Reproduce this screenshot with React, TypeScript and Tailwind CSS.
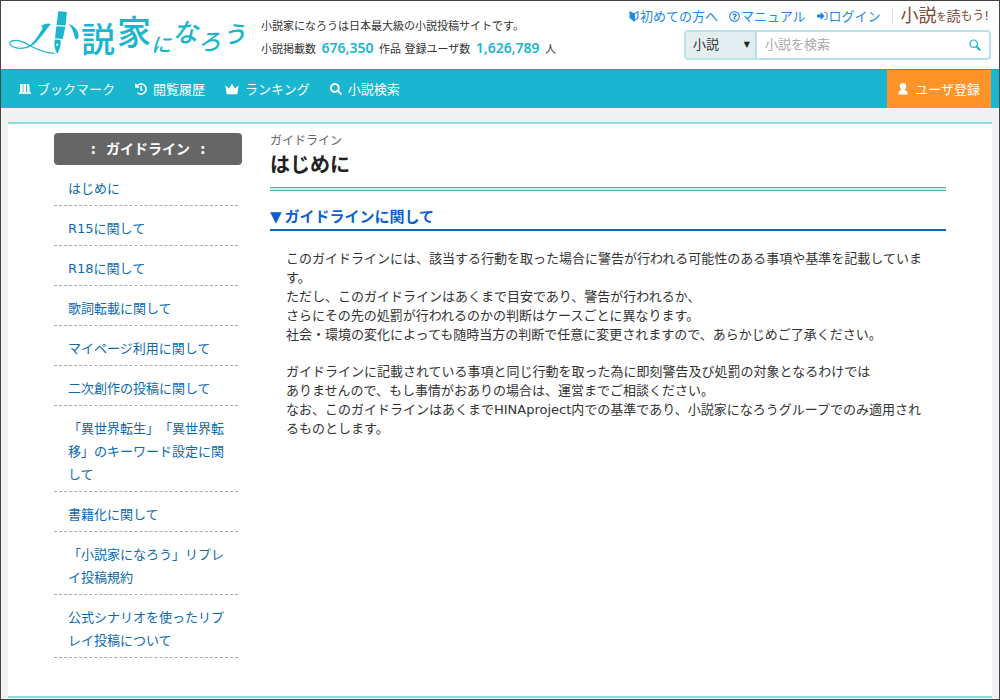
import type { ReactNode } from 'react'
import { FaHistory, FaRegQuestionCircle, FaSearch } from 'react-icons/fa'

const guideLinks = [
  'はじめに',
  'R15に関して',
  'R18に関して',
  '歌詞転載に関して',
  'マイページ利用に関して',
  '二次創作の投稿に関して',
  '「異世界転生」「異世界転移」のキーワード設定に関して',
  '書籍化に関して',
  '「小説家になろう」リプレイ投稿規約',
  '公式シナリオを使ったリプレイ投稿について',
]

function BooksIcon() {
  return (
    <svg width="12" height="12" viewBox="0 0 12 12" fill="currentColor">
      <rect x="1" y="1" width="2.6" height="8.6" />
      <rect x="4.4" y="1" width="2.6" height="8.6" />
      <path d="M7.7 1h2.5l.6 8.600H8.200z" />
      <rect x="0" y="9.2" width="12" height="1.6" />
    </svg>
  )
}

function BeginnerIcon() {
  return (
    <svg width="10" height="12" viewBox="0 0 10 12">
      <path d="M.5 1 5 3.200V11.500L.5 8z" fill="currentColor" />
      <path d="M9 1.700 5.400 3.600v7L9 7.700z" fill="none" stroke="currentColor" strokeWidth="1.100" />
    </svg>
  )
}

function LoginIcon() {
  return (
    <svg width="11" height="10" viewBox="0 0 11 10">
      <path d="M0 3.400h3.600V1L7.600 5l-4 4V6.600H0z" fill="currentColor" />
      <path d="M7.500 1.500h1a1.500 1.500 0 0 1 1.500 1.500v4a1.500 1.500 0 0 1-1.500 1.500h-1" fill="none" stroke="currentColor" strokeWidth="1" />
    </svg>
  )
}

function CrownIcon() {
  return (
    <svg width="14" height="12" viewBox="0 0 14 12" fill="currentColor">
      <path d="M.3 2.200 4 5.600 7 .8 10 5.600 13.700 2.200 12.300 11.300H1.700z" />
    </svg>
  )
}

function PersonIcon() {
  return (
    <svg width="10" height="12" viewBox="0 0 10 12" fill="currentColor">
      <path d="M5 0a3.200 3.200 0 0 1 3.200 3.300C8.200 5 7.300 6.500 6.400 6.900 8.600 7.300 9.600 8.600 9.600 11.600H.4C.4 8.600 1.400 7.300 3.600 6.900 2.700 6.500 1.800 5 1.800 3.300A3.200 3.200 0 0 1 5 0z" />
    </svg>
  )
}

function Logo() {
  return (
    <svg
      width="240"
      height="68"
      viewBox="8 1 240 68"
      fill="#1ab6cd"
      className="shrink-0 font-medium"
      role="img"
      aria-label="小説家になろう"
    >
      {/* left sweep */}
      <path d="M41 26C44.500 23.500 49 22.800 50.800 24.300 45 31 41 38 33.500 44.700L31.500 44C36.500 38.500 40 33 42.500 28.500 42.500 27.300 42 26.500 41 26z" />
      {/* loop and tail */}
      <path
        d="M33 43.800C28 49 18 49.500 12.500 46.500 7.500 43.500 10 40.300 16 40.300 27 40.300 34 52.500 54 53.400"
        fill="none"
        stroke="#1ab6cd"
        strokeWidth="1.300"
        strokeLinecap="round"
      />
      {/* fountain pen */}
      <path d="M58.300 11.300 66.900 12.100 65.600 25.400 56.600 25z" />
      <path d="M56.400 26.300 65.400 26.700 62.700 39 55 38.200z" />
      <path
        d="M54.800 39.500 60.500 39.900C61.200 44 60.300 48 57.300 54 54.600 49 53.700 44.500 54.800 39.500zM57.200 43.600a1 1.200 0 1 0 .1 2.400 1 1.200 0 0 0-.1-2.400z"
        fillRule="evenodd"
      />
      {/* right drop */}
      <path d="M68.700 23.800C74 26 78.500 30.500 78.600 35.800 78.500 39.600 75.800 40.500 74.800 37.500 74 33 72 28 68.700 23.800z" />
      <text x="81" y="52" fontSize="34">説</text>
      <text x="117" y="45" fontSize="34">家</text>
      <text x="151" y="52" fontSize="20" fontStyle="italic">に</text>
      <text x="172" y="42" fontSize="26" fontStyle="italic">な</text>
      <text x="198" y="50" fontSize="23" fontStyle="italic">ろ</text>
      <text x="222" y="43" fontSize="24" fontStyle="italic">う</text>
    </svg>
  )
}

function TopLink({ icon, children }: { icon: ReactNode; children: ReactNode }) {
  return (
    <a href="#" className="flex items-center gap-px text-[#1f87e8]">
      {icon}
      {children}
    </a>
  )
}

function NavLink({ icon, children }: { icon: ReactNode; children: ReactNode }) {
  return (
    <a href="#" className="flex items-center gap-[6px]">
      {icon}
      {children}
    </a>
  )
}

function Header() {
  return (
    <header className="flex bg-white pr-2 pl-[7px]">
      <a href="#" className="shrink-0">
        <Logo />
      </a>
      <div className="ml-[13px] pt-[14px] text-[11px] leading-[23px] whitespace-nowrap text-[#333]">
        <p>小説家になろうは日本最大級の小説投稿サイトです。</p>
        <p>
          小説掲載数 <b className="mx-[2px] font-['Noto_Sans'] text-sm leading-none font-semibold text-[#1ab6cd]">676,350</b> 作品 登録ユーザ数{' '}
          <b className="mx-[2px] font-['Noto_Sans'] text-sm leading-none font-semibold text-[#1ab6cd]">1,626,789</b> 人
        </p>
      </div>

      <div className="ml-auto flex flex-col items-end gap-1 pt-[5px]">
        <div className="flex h-5 items-center gap-[11px] whitespace-nowrap">
          <TopLink icon={<BeginnerIcon />}>初めての方へ</TopLink>
          <TopLink icon={<FaRegQuestionCircle size={11} />}>マニュアル</TopLink>
          <TopLink icon={<LoginIcon />}>ログイン</TopLink>
          <a href="#" className="flex h-4 items-center border-l border-[#ddd] pr-[2px] pl-2 text-[#7b4a35]">
            <span className="text-lg leading-4">小説</span>
            <span className="text-[10px]">を</span>
            <span className="text-sm">読</span>
            <span className="text-xs">もう!</span>
          </a>
        </div>

        <form className="flex h-[30px] w-[307px] rounded-sm border-2 border-[#b5e5ea] bg-white">
          <div className="relative w-[71px] border-r-2 border-[#b5e5ea] bg-[#e2eef0]">
            <select aria-label="検索対象" className="h-full w-full appearance-none pb-[2px] pl-[7px] text-[#333] outline-none">
              <option>小説</option>
            </select>
            <span className="pointer-events-none absolute top-1/2 right-[5px] -translate-y-1/2 font-['DejaVu_Sans'] text-[8px] leading-none text-[#222]">
              ▼
            </span>
          </div>
          <input
            type="text"
            aria-label="小説を検索"
            placeholder="小説を検索"
            className="min-w-0 flex-1 pb-[2px] pl-2 outline-none placeholder:text-[#aaa]"
          />
          <button type="submit" aria-label="検索" className="px-2 text-[#1ab6cd]">
            <svg width="12" height="12" viewBox="0 0 12 12" fill="none" stroke="currentColor">
              <circle cx="4.700" cy="4.700" r="3.700" strokeWidth="1.200" />
              <path d="m7.500 7.500 3.700 3.700" strokeWidth="2" />
            </svg>
          </button>
        </form>
      </div>
    </header>
  )
}

function Nav() {
  return (
    <nav className="flex h-[39px] items-stretch border-t border-[#0aa9c4] bg-[#1ab6cf] pr-2 pl-[18px] text-white">
      <div className="flex items-center gap-5">
        <NavLink icon={<BooksIcon />}>ブックマーク</NavLink>
        <NavLink icon={<FaHistory size={12} />}>閲覧履歴</NavLink>
        <NavLink icon={<CrownIcon />}>ランキング</NavLink>
        <NavLink icon={<FaSearch size={12} />}>小説検索</NavLink>
      </div>
      <a href="#" className="ml-auto flex items-center gap-[7px] bg-[#ff942b] px-[11px]">
        <PersonIcon />
        ユーザ登録
      </a>
    </nav>
  )
}

function Sidebar() {
  return (
    <aside className="w-[188px] shrink-0">
      <h2 className="flex h-8 items-center justify-center gap-[10px] rounded bg-[#666] text-sm font-bold text-white">
        <span>:</span>
        <span>ガイドライン</span>
        <span>:</span>
      </h2>
      <ul className="mr-1 pt-px">
        {guideLinks.map((label) => (
          <li key={label} className="border-b border-dashed border-[#aaa] pt-[11px] pr-2 pb-[5px] pl-[14px] leading-[23px]">
            <a href="#" className="text-[#0c69b0]">{label}</a>
          </li>
        ))}
      </ul>
    </aside>
  )
}

export default function App() {
  return (
    <div
      lang="ja"
      className="flex min-h-screen flex-col border border-[#444] bg-[#f0f1f3] font-['DejaVu_Sans','Noto_Sans_CJK_JP',sans-serif] text-[13px] leading-[19px] text-[#333] [text-spacing-trim:space-all]"
    >
      <Header />
      <Nav />
      <main className="mx-[7px] mt-[14px] mb-px flex-1 border-y-2 border-[#8bdce5] bg-white pt-[9px] pb-8">
        <div className="mx-auto flex max-w-[892px] gap-7">
          <Sidebar />
          <article className="min-w-0 flex-1">
            <p className="text-xs leading-4 text-[#666]">ガイドライン</p>
            <h1 className="text-xl leading-8 font-bold text-[#222]">はじめに</h1>
            <hr className="mt-[6px] h-1 border-y border-[#4fb0a4] bg-[#d5efec]" />
            <h2 className="mt-[15px] border-b-2 border-[#1263c6] pb-px text-[15px] leading-[22px] font-bold text-[#0b5fd0]">
              <span className="mr-[3px]">▼</span>ガイドラインに関して
            </h2>
            <div className="mt-[18px] px-4">
              <p>
                このガイドラインには、該当する行動を取った場合に警告が行われる可能性のある事項や基準を記載しています。
                <br />
                ただし、このガイドラインはあくまで目安であり、警告が行われるか、
                <br />
                さらにその先の処罰が行われるのかの判断はケースごとに異なります。
                <br />
                社会・環境の変化によっても随時当方の判断で任意に変更されますので、あらかじめご了承ください。
              </p>
              <p className="mt-[18px]">
                ガイドラインに記載されている事項と同じ行動を取った為に即刻警告及び処罰の対象となるわけでは
                <br />
                ありませんので、もし事情がおありの場合は、運営までご相談ください。
                <br />
                なお、このガイドラインはあくまでHINAproject内での基準であり、小説家になろうグループでのみ適用されるものとします。
              </p>
            </div>
          </article>
        </div>
      </main>
    </div>
  )
}
